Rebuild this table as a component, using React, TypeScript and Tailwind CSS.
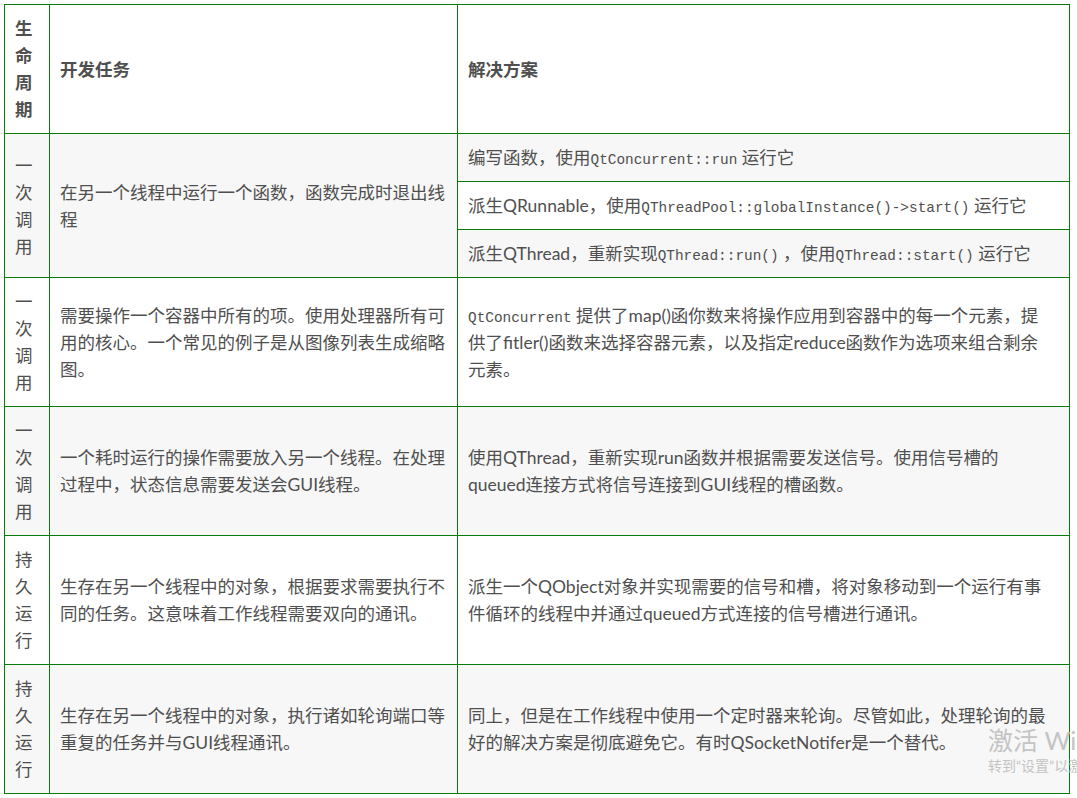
import React from "react"

const SANS = "font-['Lato','Noto_Sans_CJK_SC',sans-serif]"

function Code({ children }: { children: React.ReactNode }) {
  return (
    <span className="font-['Liberation_Mono','Noto_Sans_CJK_SC',monospace] text-[14.4px] leading-none">
      {children}
    </span>
  )
}

function Stack({ text }: { text: string }) {
  return (
    <>
      {text.split("").map((c, i) => (
        <span key={i} className="block">
          {c}
        </span>
      ))}
    </>
  )
}

function Lines({ lines }: { lines: React.ReactNode[] }) {
  return (
    <>
      {lines.map((l, i) => (
        <span key={i} className="block h-[27px] whitespace-nowrap">
          {l}
        </span>
      ))}
    </>
  )
}

const td = "border border-[#0a7a0a] px-[10px] py-[10px] align-middle"

const rows = [
  {
    life: "一次调用",
    task: [
      "需要操作一个容器中所有的项。使用处理器所有可",
      "用的核心。一个常见的例子是从图像列表生成缩略",
      "图。",
    ],
    solution: [
      <>
        <Code>QtConcurrent</Code> 提供了map()函你数来将操作应用到容器中的每一个元素，提
      </>,
      "供了fitler()函数来选择容器元素，以及指定reduce函数作为选项来组合剩余",
      "元素。",
    ],
  },
  {
    life: "一次调用",
    task: [
      "一个耗时运行的操作需要放入另一个线程。在处理",
      "过程中，状态信息需要发送会GUI线程。",
    ],
    solution: [
      "使用QThread，重新实现run函数并根据需要发送信号。使用信号槽的",
      "queued连接方式将信号连接到GUI线程的槽函数。",
    ],
  },
  {
    life: "持久运行",
    task: [
      "生存在另一个线程中的对象，根据要求需要执行不",
      "同的任务。这意味着工作线程需要双向的通讯。",
    ],
    solution: [
      "派生一个QObject对象并实现需要的信号和槽，将对象移动到一个运行有事",
      "件循环的线程中并通过queued方式连接的信号槽进行通讯。",
    ],
  },
  {
    life: "持久运行",
    task: [
      "生存在另一个线程中的对象，执行诸如轮询端口等",
      "重复的任务并与GUI线程通讯。",
    ],
    solution: [
      "同上，但是在工作线程中使用一个定时器来轮询。尽管如此，处理轮询的最",
      "好的解决方案是彻底避免它。有时QSocketNotifer是一个替代。",
    ],
  },
]

export default function App() {
  return (
    <div className={`relative h-[798px] w-[1077px] overflow-hidden bg-white pl-[4px] pt-[4px] text-[17.5px] leading-[27px] text-[#4f4f4f] ${SANS}`}>
      <table className="w-[1065px] table-fixed border-collapse">
        <colgroup>
          <col className="w-[45px]" />
          <col className="w-[408px]" />
          <col className="w-[612px]" />
        </colgroup>
        <tbody>
          <tr className="bg-white font-bold">
            <td className={td}>
              <Stack text="生命周期" />
            </td>
            <td className={td}>开发任务</td>
            <td className={td}>解决方案</td>
          </tr>
          <tr className="bg-[#f7f7f7]">
            <td className={td} rowSpan={3}>
              <Stack text="一次调用" />
            </td>
            <td className={td} rowSpan={3}>
              <Lines lines={["在另一个线程中运行一个函数，函数完成时退出线", "程"]} />
            </td>
            <td className={td}>
              <Lines
                lines={[
                  <>
                    编写函数，使用<Code>QtConcurrent::run</Code> 运行它
                  </>,
                ]}
              />
            </td>
          </tr>
          <tr className="bg-white">
            <td className={td}>
              <Lines
                lines={[
                  <>
                    派生QRunnable，使用<Code>QThreadPool::globalInstance()-&gt;start()</Code> 运行它
                  </>,
                ]}
              />
            </td>
          </tr>
          <tr className="bg-[#f7f7f7]">
            <td className={td}>
              <Lines
                lines={[
                  <>
                    派生QThread，重新实现<Code>QThread::run()</Code> ，使用<Code>QThread::start()</Code> 运行它
                  </>,
                ]}
              />
            </td>
          </tr>
          {rows.map((r, i) => (
            <tr key={i} className={i % 2 === 0 ? "bg-white" : "bg-[#f7f7f7]"}>
              <td className={td}>
                <Stack text={r.life} />
              </td>
              <td className={td}>
                <Lines lines={r.task} />
              </td>
              <td className={td}>
                <Lines lines={r.solution} />
              </td>
            </tr>
          ))}
        </tbody>
      </table>

      {/* windows activation watermark */}
      <div className="pointer-events-none absolute left-[988px] top-[724px] whitespace-nowrap text-[#c4c4c4]">
        <div className="text-[25px] leading-[32px]">激活 Windows</div>
        <div className="text-[14px] leading-[20px]">转到“设置”以激活 Windows。</div>
      </div>
    </div>
  )
}
